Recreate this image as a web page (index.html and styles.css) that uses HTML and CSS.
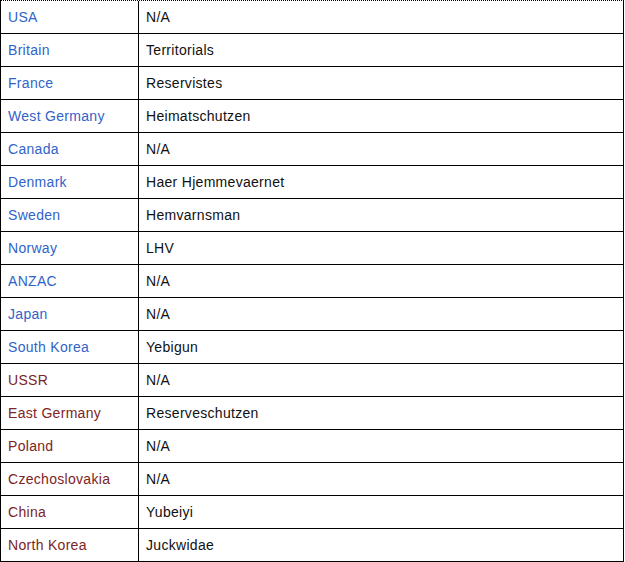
FILE: index.html
```html
<!DOCTYPE html>
<html>
<head>
<meta charset="utf-8">
<link rel="stylesheet" href="styles.css">
</head>
<body>
<table class="units">
<tbody>
<tr><td class="c1"><a class="blue">USA</a></td><td class="c2">N/A</td></tr>
<tr><td class="c1"><a class="blue">Britain</a></td><td class="c2">Territorials</td></tr>
<tr><td class="c1"><a class="blue">France</a></td><td class="c2">Reservistes</td></tr>
<tr><td class="c1"><a class="blue">West Germany</a></td><td class="c2">Heimatschutzen</td></tr>
<tr><td class="c1"><a class="blue">Canada</a></td><td class="c2">N/A</td></tr>
<tr><td class="c1"><a class="blue">Denmark</a></td><td class="c2">Haer Hjemmevaernet</td></tr>
<tr><td class="c1"><a class="blue">Sweden</a></td><td class="c2">Hemvarnsman</td></tr>
<tr><td class="c1"><a class="blue">Norway</a></td><td class="c2">LHV</td></tr>
<tr><td class="c1"><a class="blue">ANZAC</a></td><td class="c2">N/A</td></tr>
<tr><td class="c1"><a class="blue">Japan</a></td><td class="c2">N/A</td></tr>
<tr><td class="c1"><a class="blue">South Korea</a></td><td class="c2">Yebigun</td></tr>
<tr><td class="c1"><a class="red">USSR</a></td><td class="c2">N/A</td></tr>
<tr><td class="c1"><a class="red">East Germany</a></td><td class="c2">Reserveschutzen</td></tr>
<tr><td class="c1"><a class="red">Poland</a></td><td class="c2">N/A</td></tr>
<tr><td class="c1"><a class="red">Czechoslovakia</a></td><td class="c2">N/A</td></tr>
<tr><td class="c1"><a class="red">China</a></td><td class="c2">Yubeiyi</td></tr>
<tr><td class="c1"><a class="red">North Korea</a></td><td class="c2">Juckwidae</td></tr>
</tbody>
</table>
</body>
</html>
```
FILE: styles.css
```css
html, body {
  margin: 0;
  padding: 0;
  background: #fff;
}
.units {
  border-collapse: separate;
  border-spacing: 0;
  width: 624px;
  border-top: 1px dotted #000;
  border-left: 1px solid #000;
  font-family: "Liberation Sans", Arial, sans-serif;
  font-size: 14px;
  letter-spacing: 0.3px;
  color: #111;
}
.units td {
  height: 33px;
  padding: 0 0 0 7px;
  box-sizing: border-box;
  border-right: 1px solid #000;
  border-bottom: 1px solid #000;
  vertical-align: middle;
  line-height: 16px;
}
.c1 {
  width: 138px;
}
.blue {
  color: #3163c9;
  text-decoration: none;
}
.red {
  color: #7d2424;
  text-decoration: none;
}
```
